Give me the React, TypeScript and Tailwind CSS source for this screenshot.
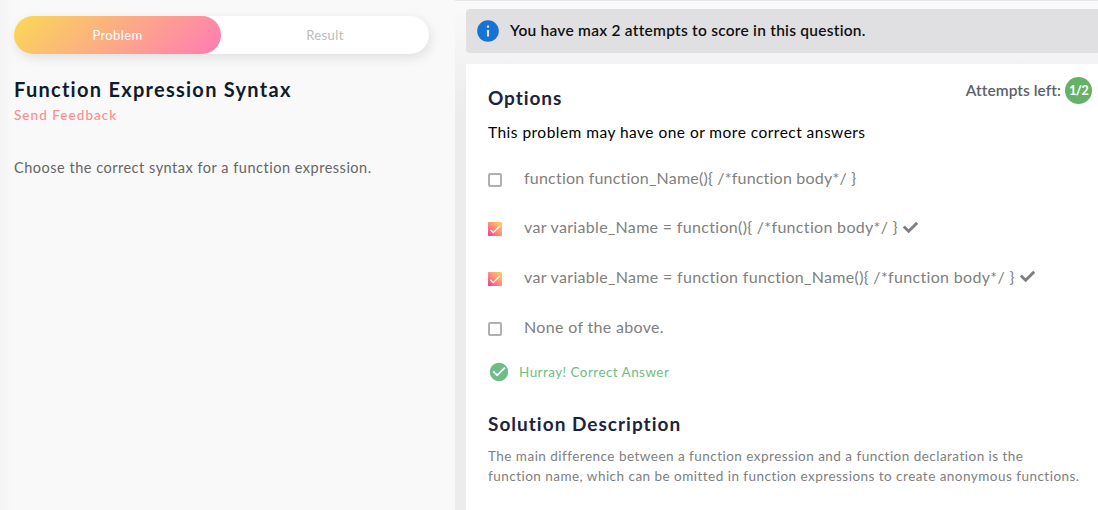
import { FaCheck } from "react-icons/fa";
import { MdCheckCircle, MdInfo } from "react-icons/md";

const options = [
  { label: "function function_Name(){ /*function body*/ }", correct: false, tracking: "tracking-[0.21px]" },
  { label: "var variable_Name = function(){ /*function body*/ }", correct: true, tracking: "tracking-[0.32px]" },
  { label: "var variable_Name = function function_Name(){ /*function body*/ }", correct: true, tracking: "tracking-[0.33px]" },
  { label: "None of the above.", correct: false, tracking: "tracking-[0.33px]" },
];

function Option({ label, correct, tracking }: { label: string; correct: boolean; tracking: string }) {
  return (
    <li className="flex h-[49.6px] items-center text-[16px] text-[#808080]">
      {correct ? (
        <span className="mt-[4px] flex size-[14px] items-center justify-center rounded-[1px] bg-linear-to-tr from-[#f72585] to-[#fbd75b]">
          <svg viewBox="0 0 14 14" className="size-[14px]" fill="none" stroke="white" strokeWidth="1.3">
            <path d="M2.4 7.8 5.2 10.6 11.9 4" />
          </svg>
        </span>
      ) : (
        <span className="mt-[4px] size-[14px] rounded-[2px] border-2 border-[#b0b0b0]" />
      )}
      <span className={`ml-[22px] whitespace-nowrap ${tracking}`}>{label}</span>
      {correct && <FaCheck className="ml-[5px] size-[15px]" />}
    </li>
  );
}

export default function App() {
  return (
    <div className="flex h-[510px] w-[1098px] overflow-hidden bg-[#ececec] font-[Lato,sans-serif]">
      <section className="w-[455px] shrink-0 bg-linear-to-r from-[#f5f5f5] to-[#f9f9f9] to-[14px] px-[14px] pt-[16px]">
        <div className="flex h-[38px] w-[415px] rounded-full bg-white text-[13px] tracking-[0.4px] shadow-[2px_4px_12px_rgba(0,0,0,0.1)]">
          <div className="flex w-[207px] items-center justify-center rounded-full bg-linear-[135deg] from-[#fad956] to-[#ff7bb5] pt-px text-white">Problem</div>
          <div className="flex w-[208px] items-center justify-center pt-px text-[#bbbbbb]">Result</div>
        </div>
        <h1 className="mt-[21px] text-[20px] leading-[28px] font-bold tracking-[1.27px] text-[#111b2e]">Function Expression Syntax</h1>
        <div className="mt-[3px] text-[13.5px] leading-[18px] font-medium tracking-[1.05px] text-[#ff8c8f]">Send Feedback</div>
        <p className="mt-[34px] text-[14.5px] leading-[20px] tracking-[0.51px] text-[#666]">Choose the correct syntax for a function expression.</p>
      </section>
      <section className="min-w-0 grow border-t border-[#e8e8e8] bg-linear-to-b from-[#fafafa] to-[#ececec] to-[110px] pl-[11px]">
        <div className="mt-[8px] flex h-[44px] items-center rounded-l bg-[#e0e0e2] pl-[9px]">
          <MdInfo className="size-[26px] text-[#1872d4]" />
          <span className="ml-[9px] text-[15.5px] font-semibold tracking-[0.25px] text-[#111]">You have max 2 attempts to score in this question.</span>
        </div>
        <div className="mt-[11px] h-[446px] bg-white px-[22px]">
          <div className="flex items-start justify-between">
            <h2 className="pt-[20px] text-[19px] leading-[28px] font-bold tracking-[0.92px] text-[#1c2340]">Options</h2>
            <div className="mt-[13px] -mr-[16px] flex h-[27px] items-center text-[15.5px] font-semibold tracking-[0.05px] text-[#5d616b]">
              Attempts left:
              <span className="ml-1 flex size-[27px] items-center justify-center rounded-full bg-[#66b168] text-[13px] font-bold tracking-[-0.7px] text-white">1/2</span>
            </div>
          </div>
          <p className="mt-[10px] text-[15.5px] leading-[20px] tracking-[0.47px] text-black">This problem may have one or more correct answers</p>
          <ul className="mt-[11px]">
            {options.map((o) => (
              <Option key={o.label} {...o} />
            ))}
          </ul>
          <div className="mt-[10px] flex items-center text-[13.5px] tracking-[0.44px] text-[#6fbc86]">
            <MdCheckCircle className="size-[22px]" />
            <span className="-mt-px ml-[9px]">Hurray! Correct Answer</span>
          </div>
          <h2 className="mt-[27px] text-[19px] leading-[28px] font-bold tracking-[1.01px] text-[#1c2340]">Solution Description</h2>
          <p className="mt-[8px] text-[13.5px] leading-[20px] tracking-[0.475px] whitespace-nowrap text-[#808080]">
            The main difference between a function expression and a function declaration is the
            <br />
            function name, which can be omitted in function expressions to create anonymous functions.
          </p>
        </div>
      </section>
    </div>
  );
}
